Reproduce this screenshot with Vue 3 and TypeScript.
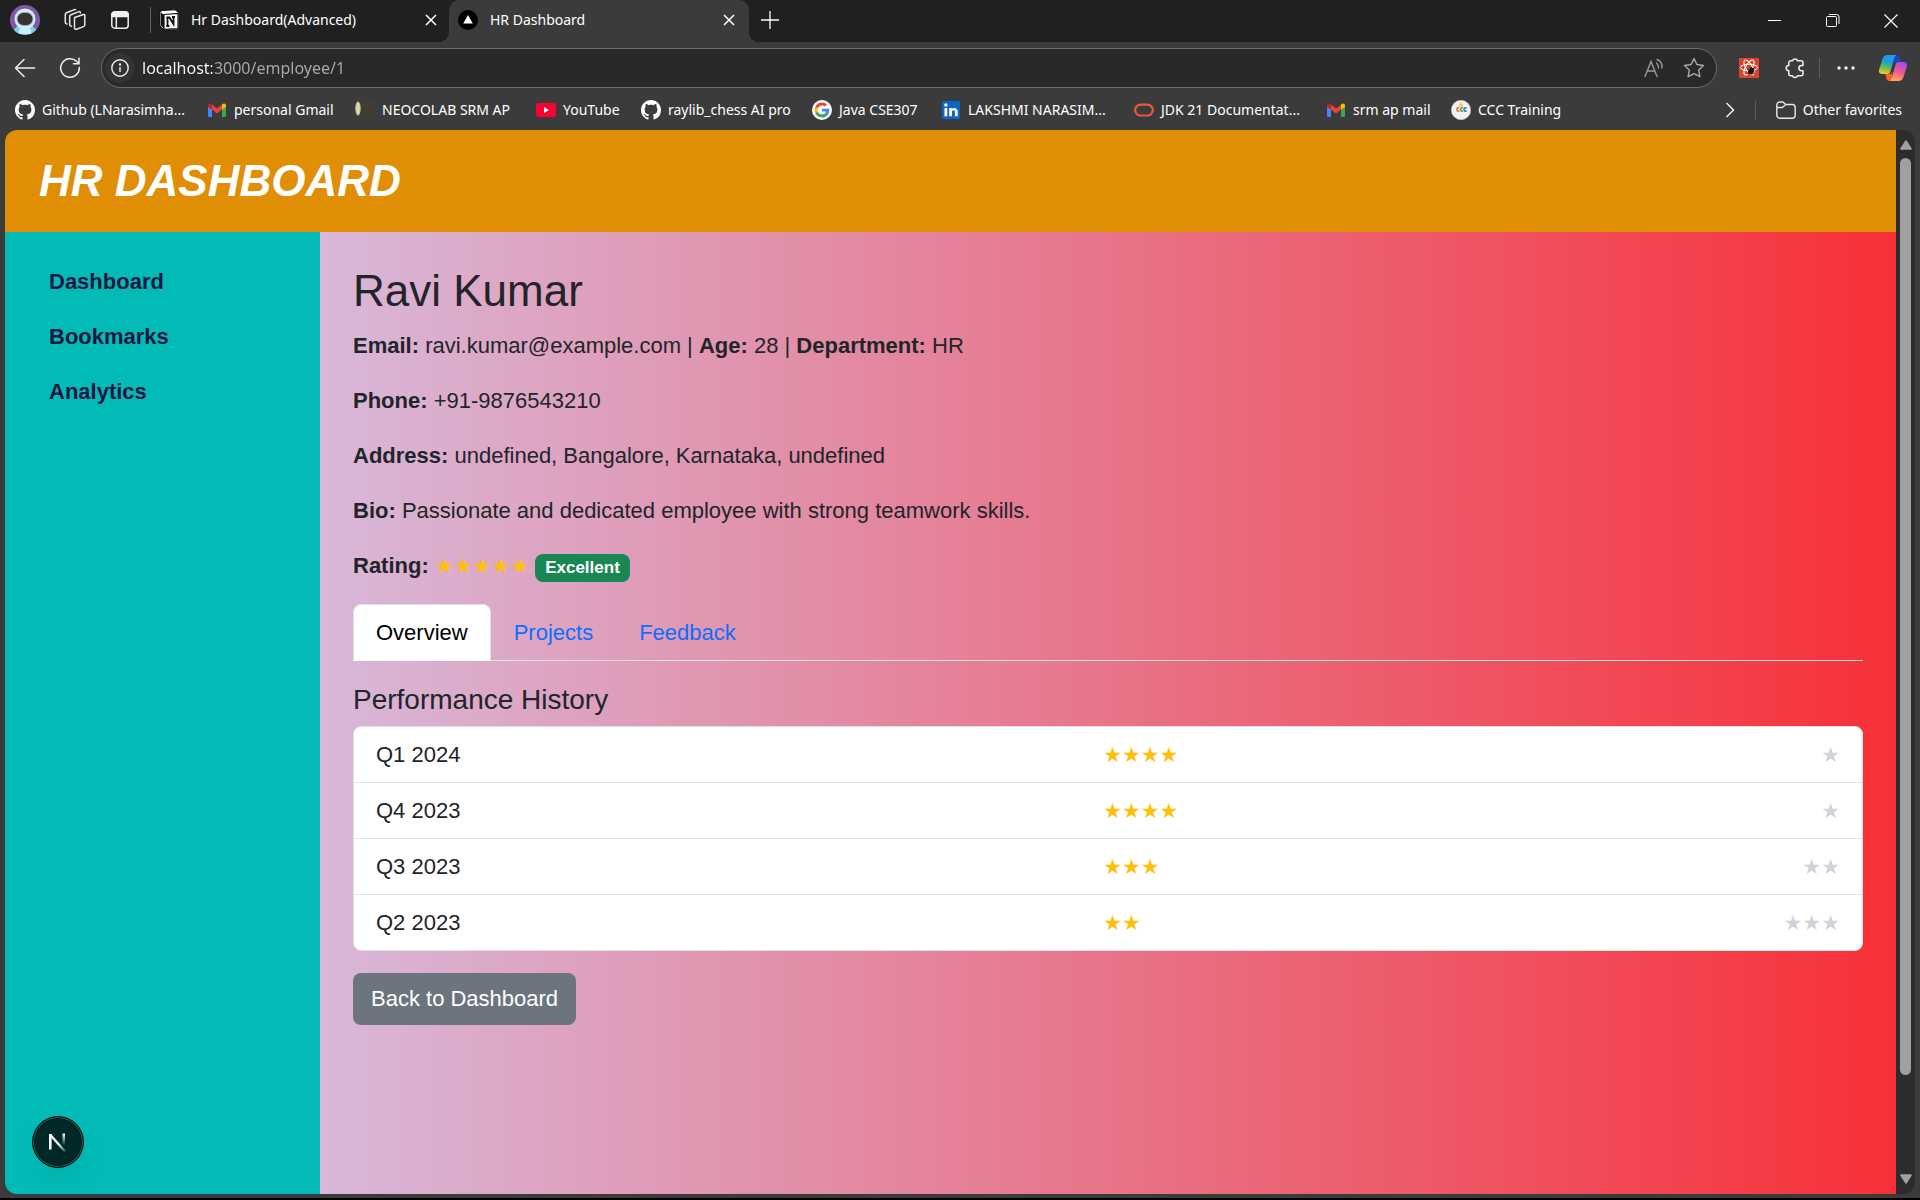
<script setup lang="ts">
import { ref } from 'vue'

interface Bookmark {
  label: string
  icon: string
  width: number
}

interface Quarter {
  name: string
  score: number
}

const bookmarks: Bookmark[] = [
  { label: 'Github (LNarasimha...', icon: 'github', width: 192 },
  { label: 'personal Gmail', icon: 'gmail', width: 148 },
  { label: 'NEOCOLAB SRM AP', icon: 'srm', width: 181 },
  { label: 'YouTube', icon: 'youtube', width: 105 },
  { label: 'raylib_chess AI pro', icon: 'github', width: 171 },
  { label: 'Java CSE307', icon: 'google', width: 129 },
  { label: 'LAKSHMI NARASIM...', icon: 'linkedin', width: 193 },
  { label: 'JDK 21 Documentat...', icon: 'oracle', width: 192 },
  { label: 'srm ap mail', icon: 'gmail', width: 125 },
  { label: 'CCC Training', icon: 'ccc', width: 125 },
]

const links = ['Dashboard', 'Bookmarks', 'Analytics']
const tabs = ['Overview', 'Projects', 'Feedback']
const activeTab = ref('Overview')
const address = ref('localhost:3000/employee/1')

const history: Quarter[] = [
  { name: 'Q1 2024', score: 4 },
  { name: 'Q4 2023', score: 4 },
  { name: 'Q3 2023', score: 3 },
  { name: 'Q2 2023', score: 2 },
]

const stars = (n: number): string => '★'.repeat(n)
</script>

<template>
  <div class="window">
    <div class="tabstrip">
      <div class="strip-tools">
        <button class="icon-btn" aria-label="Profile">
          <svg width="30" height="30" viewBox="0 0 30 30">
            <defs><clipPath id="av"><circle cx="15" cy="15" r="15" /></clipPath></defs>
            <g clip-path="url(#av)">
              <rect width="30" height="30" fill="#7f5aa8" />
              <path d="M3 30c0-7 4-10 12-10s12 3 12 10z" fill="#7fd0e4" />
              <circle cx="15" cy="14" r="10.500" fill="#d3eef4" />
              <rect x="7" y="7.500" width="16" height="13" rx="6.500" fill="#35322f" stroke="#8fb7c1" />
              <rect x="9" y="24" width="12" height="5" rx="1" fill="#c9f0f7" />
            </g>
          </svg>
        </button>
        <button class="icon-btn" aria-label="Workspaces">
          <svg width="24" height="24" viewBox="0 0 24 24" fill="none" stroke="#e8e8e8" stroke-width="1.500" stroke-linejoin="round">
            <path d="M11.500 9.500l9-3a1 1 0 0 1 1.300 1v9.300a2 2 0 0 1-1.300 1.800l-7 2.700a1.500 1.500 0 0 1-2-1.400z" />
            <path d="M9 18.500l-1.500-.6a1.500 1.500 0 0 1-.8-1.400V8.600a2 2 0 0 1 1.200-1.800l8-3.200a1 1 0 0 1 1.400 1v1" />
            <path d="M4.600 16.200l-1.500-.6a1.500 1.500 0 0 1-.8-1.400V6.600a2 2 0 0 1 1.200-1.800l8-3.200a1 1 0 0 1 1.300.7" />
          </svg>
        </button>
        <button class="icon-btn" aria-label="Tab actions">
          <svg width="20" height="20" viewBox="0 0 20 20" fill="none" stroke="#f0f0f0" stroke-width="1.500">
            <rect x="1.800" y="1.800" width="16.400" height="16.400" rx="3" />
            <path d="M2 5a3 3 0 0 1 3-3h10a3 3 0 0 1 3 3v1.500H2z" fill="#f0f0f0" />
            <path d="M6.300 6v12" />
          </svg>
        </button>
        <span class="divider"></span>
      </div>

      <div class="tab">
        <svg width="22" height="22" viewBox="0 0 22 22">
          <path d="M2 3l2-1.500 13-.7 4 3V19l-1.500 1.800L6 21l-4-4z" fill="#fff" stroke="#111" />
          <path d="M3 3.500l3 2.500v14L3 16.500z" fill="#111" />
          <path d="M6 5.500l14-1v15l-14 .8z" fill="#fff" stroke="#111" stroke-width="1.200" />
          <path d="M9.500 17V8.500h2l4 6.500V8M8.300 8.500h2M14 8h3M8.300 17h3" fill="none" stroke="#111" stroke-width="1.800" />
        </svg>
        <span class="tab-title">Hr Dashboard(Advanced)</span>
        <button class="icon-btn" aria-label="Close Hr Dashboard(Advanced)">
          <svg width="12" height="12" viewBox="0 0 12 12" stroke="#fff" stroke-width="1.500"><path d="M1 1l10 10M11 1L1 11" /></svg>
        </button>
      </div>

      <div class="tab current">
        <svg width="20" height="20" viewBox="0 0 20 20"><circle cx="10" cy="10" r="10" fill="#000" /><path d="M10 5l4.800 8.500H5.200z" fill="#fff" /></svg>
        <span class="tab-title">HR Dashboard</span>
        <button class="icon-btn" aria-label="Close HR Dashboard">
          <svg width="12" height="12" viewBox="0 0 12 12" stroke="#fff" stroke-width="1.500"><path d="M1 1l10 10M11 1L1 11" /></svg>
        </button>
      </div>
      <button class="icon-btn new-tab" aria-label="New tab">
        <svg width="18" height="18" viewBox="0 0 18 18" stroke="#fff" stroke-width="1.300"><path d="M9 0v18M0 9h18" /></svg>
      </button>

      <div class="window-buttons">
        <button class="icon-btn" aria-label="Minimize">
          <svg width="14" height="14" viewBox="0 0 14 14" stroke="#fff"><path d="M0 6.500h13" /></svg>
        </button>
        <button class="icon-btn" aria-label="Restore">
          <svg width="14" height="14" viewBox="0 0 14 14" fill="none" stroke="#fff"><rect x="0.500" y="2.500" width="10" height="10" rx="1" /><path d="M3 .5h7.500a2.500 2.500 0 0 1 2.500 2.500V10" /></svg>
        </button>
        <button class="icon-btn" aria-label="Close window">
          <svg width="14" height="14" viewBox="0 0 14 14" stroke="#fff" stroke-width="1.200"><path d="M.5.5l13 13M13.500.5l-13 13" /></svg>
        </button>
      </div>
    </div>

    <div class="toolbar">
      <button class="icon-btn" aria-label="Back">
        <svg width="22" height="20" viewBox="0 0 22 20" fill="none" stroke="#f0f0f0" stroke-width="1.500" stroke-linecap="round" stroke-linejoin="round"><path d="M10 1.500L1.500 10l8.500 8.500M1.800 10H20.500" /></svg>
      </button>
      <button class="icon-btn refresh" aria-label="Refresh">
        <svg width="22" height="22" viewBox="0 0 22 22" fill="none" stroke="#f0f0f0" stroke-width="1.500" stroke-linecap="round"><path d="M20.300 10.500A9.300 9.300 0 1 1 17.500 4.300L20 6.700M20 1.300v5.500h-5.500" /></svg>
      </button>
      <div class="address">
        <button class="site-info" aria-label="Site information">
          <svg width="18" height="18" viewBox="0 0 18 18" fill="none" stroke="#f0f0f0" stroke-width="1.400"><circle cx="9" cy="9" r="8.200" /><path d="M9 8v5" /><circle cx="9" cy="5.500" r=".5" fill="#fff" /></svg>
        </button>
        <input v-model="address" class="url" type="text" aria-label="Address" />
        <button class="icon-btn" aria-label="Read aloud">
          <svg width="20" height="20" viewBox="0 0 20 20" fill="none" stroke="#9a9a9a" stroke-width="1.400" stroke-linecap="round"><path d="M1 18.500L7 3.500l6 15M3.300 13h7.500M12.500 5a6 6 0 0 1 2 5M13 1.500a8 8 0 0 1 5 8.500" /></svg>
        </button>
        <button class="icon-btn" aria-label="Add to favorites">
          <svg width="22" height="22" viewBox="0 0 22 22" fill="none" stroke="#a8a8a8" stroke-width="1.400" stroke-linejoin="round"><path d="M11 1.500l2.900 6 6.600 1-4.800 4.600 1.200 6.600-5.900-3.100-5.900 3.100 1.200-6.600L1.500 8.500l6.600-1z" /></svg>
        </button>
      </div>
      <button class="icon-btn" aria-label="React Developer Tools">
        <svg width="20" height="20" viewBox="0 0 20 20">
          <rect width="20" height="20" rx="1" fill="#d9452f" />
          <g fill="none" stroke="#fff" stroke-width="1"><ellipse cx="10" cy="9.500" rx="8.500" ry="3.300" /><ellipse cx="10" cy="9.500" rx="8.500" ry="3.300" transform="rotate(60 10 9.500)" /><ellipse cx="10" cy="9.500" rx="8.500" ry="3.300" transform="rotate(120 10 9.500)" /></g>
          <ellipse cx="12" cy="13" rx="2.600" ry="3.800" fill="#1c1311" transform="rotate(35 12 13)" />
          <path d="M8 11l8 5M15 10l-7 6M11 9l2 8" stroke="#1c1311" stroke-width=".8" />
        </svg>
      </button>
      <button class="icon-btn extensions" aria-label="Extensions">
        <svg width="20" height="22" viewBox="0 0 20 22" fill="none" stroke="#f0f0f0" stroke-width="1.500" stroke-linejoin="round"><path d="M7.500 3.800a2.600 2.600 0 0 1 5 0H16a2 2 0 0 1 2 2v2.700h-1.500a2.600 2.600 0 0 0 0 5.200H18v3a2 2 0 0 1-2 2h-3.500a2.600 2.600 0 0 1-5 0H5.800a2 2 0 0 1-2-2v-3a2.600 2.600 0 0 1 0-5.200V5.800a2 2 0 0 1 2-2z" /></svg>
      </button>
      <span class="divider short"></span>
      <button class="icon-btn" aria-label="Settings and more">
        <svg width="18" height="4" viewBox="0 0 18 4" fill="#f0f0f0"><circle cx="2" cy="2" r="1.700" /><circle cx="9" cy="2" r="1.700" /><circle cx="16" cy="2" r="1.700" /></svg>
      </button>
      <button class="icon-btn copilot" aria-label="Copilot">
        <svg width="28" height="26" viewBox="0 0 28 26">
          <defs>
            <linearGradient id="cpa" x1="0.500" y1="0" x2="0.300" y2="1"><stop offset="0" stop-color="#2199f2" /><stop offset=".35" stop-color="#1c9fd6" /><stop offset=".65" stop-color="#64b95a" /><stop offset="1" stop-color="#f7cb1c" /></linearGradient>
            <linearGradient id="cpb" x1="0.700" y1="0" x2="0.400" y2="1"><stop offset="0" stop-color="#a04bee" /><stop offset=".5" stop-color="#f0568f" /><stop offset="1" stop-color="#ffab57" /></linearGradient>
          </defs>
          <path d="M15 0h2.500c2 0 2.800 1.500 3.300 3.300l1 3.700h-3.600c-2 0-3 .8-3.500 2.800z" fill="#1546c8" />
          <path d="M13 26h-2.500c-2 0-2.800-1.500-3.300-3.300L6.300 19h3.500c2 0 3-.8 3.500-2.800z" fill="#f4642e" />
          <path d="M8.500 0H18c-1.600 0-2.300 1.500-2.900 3.500l-3.600 12.700C11 18 10 19 8 19H3c-2.600 0-3.600-2-2.700-5L3.600 3.700C4.400 1.200 6 0 8.500 0z" fill="url(#cpa)" />
          <path d="M19.500 26H10c1.600 0 2.300-1.500 2.900-3.500L16.500 9.800C17 8 18 7 20 7h5c2.600 0 3.600 2 2.700 5l-3.300 10.300c-.8 2.500-2.400 3.700-4.900 3.700z" fill="url(#cpb)" />
        </svg>
      </button>
    </div>

    <nav class="bookmarks" aria-label="Favorites">
      <a v-for="b in bookmarks" :key="b.label" href="#" class="bookmark" :style="{ width: b.width + 'px' }">
        <svg v-if="b.icon === 'github'" width="20" height="20" viewBox="0 0 16 16" fill="#fff"><path d="M8 0C3.580 0 0 3.580 0 8c0 3.540 2.290 6.530 5.470 7.590.4.070.55-.17.55-.38 0-.19-.01-.82-.01-1.490-2.010.37-2.530-.49-2.690-.94-.09-.23-.48-.94-.82-1.130-.28-.15-.68-.52-.01-.53.63-.01 1.080.58 1.230.82.72 1.210 1.870.87 2.330.66.07-.52.28-.87.51-1.070-1.780-.2-3.640-.89-3.640-3.950 0-.87.31-1.590.82-2.150-.08-.2-.36-1.020.08-2.120 0 0 .67-.21 2.200.82.64-.18 1.320-.27 2-.27s1.360.09 2 .27c1.530-1.040 2.200-.82 2.200-.82.44 1.100.16 1.920.08 2.120.51.56.82 1.270.82 2.150 0 3.070-1.870 3.750-3.650 3.950.29.25.54.73.54 1.480 0 1.070-.01 1.930-.01 2.200 0 .21.15.46.55.38A8.010 8.010 0 0 0 16 8c0-4.420-3.580-8-8-8z" /></svg>
        <svg v-else-if="b.icon === 'gmail'" width="20" height="20" viewBox="0 0 20 20">
          <path d="M1 6v9.500A1.500 1.500 0 0 0 2.500 17H5V8z" fill="#4285f4" />
          <path d="M19 6v9.500a1.500 1.500 0 0 1-1.500 1.500H15V8z" fill="#34a853" />
          <path d="M5 4.500l5 4 5-4v5l-5 4-5-4z" fill="#ea4335" />
          <path d="M1 5.500C1 3.200 3.300 2.800 5 4.500v5L1 7z" fill="#c5221f" />
          <path d="M19 5.500c0-2.300-2.300-2.700-4-1v5L19 7z" fill="#fbbc04" />
        </svg>
        <svg v-else-if="b.icon === 'srm'" width="20" height="20" viewBox="0 0 20 20">
          <ellipse cx="3" cy="8.500" rx="2.700" ry="7" fill="#c9c695" /><ellipse cx="3" cy="8.500" rx="1.400" ry="5" fill="#dedbb8" />
          <path d="M8 2h3v3H8v3h3v3H8M13 11V2h2v5M17 11V2l2 3v6M8 13h11M9 17h3M16 17h3" fill="none" stroke="#45432c" stroke-width="1.200" />
        </svg>
        <svg v-else-if="b.icon === 'youtube'" width="20" height="20" viewBox="0 0 20 20"><rect y="3" width="20" height="14" rx="3" fill="#ff0033" /><path d="M8 7l5 3-5 3z" fill="#fff" /></svg>
        <svg v-else-if="b.icon === 'google'" width="20" height="20" viewBox="0 0 20 20">
          <circle cx="10" cy="10" r="10" fill="#fff" />
          <g transform="translate(2.500 2.500) scale(.3125)">
            <path fill="#EA4335" d="M24 9.500c3.540 0 6.710 1.220 9.210 3.600l6.850-6.850C35.900 2.380 30.470 0 24 0 14.620 0 6.510 5.380 2.560 13.220l7.980 6.190C12.430 13.720 17.740 9.500 24 9.500z" />
            <path fill="#4285F4" d="M46.980 24.550c0-1.570-.15-3.090-.38-4.550H24v9.020h12.940c-.58 2.960-2.260 5.480-4.780 7.180l7.730 6c4.510-4.180 7.090-10.360 7.090-17.650z" />
            <path fill="#FBBC05" d="M10.530 28.590c-.48-1.450-.76-2.990-.76-4.590s.27-3.140.76-4.590l-7.980-6.190C.92 16.460 0 20.120 0 24c0 3.880.92 7.540 2.560 10.780l7.970-6.190z" />
            <path fill="#34A853" d="M24 48c6.480 0 11.930-2.130 15.890-5.810l-7.730-6c-2.150 1.450-4.920 2.300-8.160 2.300-6.260 0-11.570-4.220-13.470-9.910l-7.980 6.190C6.510 42.620 14.620 48 24 48z" />
          </g>
        </svg>
        <svg v-else-if="b.icon === 'linkedin'" width="20" height="20" viewBox="0 0 20 20"><rect x="1" y="1" width="18" height="18" rx="1.500" fill="#0a66c2" /><g fill="#fff"><rect x="3.500" y="8" width="2.800" height="8.300" /><circle cx="4.900" cy="5" r="1.700" /><path d="M8.200 8h2.600v1.200c1.700-2.300 5.900-1.600 5.900 2.300v4.800h-2.800V12c0-2.200-2.900-2.200-2.900 0v4.300H8.200z" /></g></svg>
        <svg v-else-if="b.icon === 'oracle'" width="20" height="20" viewBox="0 0 20 20"><rect x="1.200" y="4.700" width="17.600" height="10.800" rx="5.400" fill="none" stroke="#f2553f" stroke-width="2.200" /></svg>
        <svg v-else width="20" height="20" viewBox="0 0 20 20"><circle cx="10" cy="10" r="9.700" fill="#f1f1f1" stroke="#d0d0d0" stroke-width=".6" /><circle cx="10" cy="5" r="2" fill="#f4d13b" /><g fill="none" stroke-width="1.500"><path d="M8.300 8.200a1.500 1.700 0 1 0 0 2.600" stroke="#e2703a" /><path d="M12 8.200a1.500 1.700 0 1 0 0 2.600" stroke="#4aa35a" /><path d="M15.500 8.200a1.500 1.700 0 1 0 0 2.600" stroke="#3c66c9" /></g></svg>
        <span>{{ b.label }}</span>
      </a>
      <div class="bookmarks-end">
        <button class="icon-btn" aria-label="More favorites"><svg width="10" height="16" viewBox="0 0 10 16" fill="none" stroke="#f0f0f0" stroke-width="1.500"><path d="M1.500 1l7 7-7 7" /></svg></button>
        <span class="divider short"></span>
        <a href="#" class="bookmark">
          <svg width="20" height="20" viewBox="0 0 20 20" fill="none" stroke="#e8e8e8" stroke-width="1.400" stroke-linejoin="round"><path d="M.8 5a3 3 0 0 1 3-3h3l3 2.500h6.400a3 3 0 0 1 3 3v7.700a3 3 0 0 1-3 3H3.800a3 3 0 0 1-3-3zM.8 7.500h5.500l3.500-3" /></svg>
          <span>Other favorites</span>
        </a>
      </div>
    </nav>

    <div class="viewport">
      <div class="page">
        <header class="banner"><h1>HR DASHBOARD</h1></header>
        <div class="body">
          <aside class="sidebar">
            <a v-for="l in links" :key="l" href="#">{{ l }}</a>
          </aside>
          <main class="content">
            <h2>Ravi Kumar</h2>
            <p><strong>Email:</strong> ravi.kumar@example.com | <strong>Age:</strong> 28 | <strong>Department:</strong> HR</p>
            <p><strong>Phone:</strong> +91-9876543210</p>
            <p><strong>Address:</strong> undefined, Bangalore, Karnataka, undefined</p>
            <p><strong>Bio:</strong> Passionate and dedicated employee with strong teamwork skills.</p>
            <p class="rating"><strong>Rating:</strong> <span class="stars gold">{{ stars(5) }}</span> <span class="badge">Excellent</span></p>

            <div class="nav-tabs" role="tablist">
              <button v-for="t in tabs" :key="t" role="tab" class="nav-tab" :class="{ active: t === activeTab }" :aria-selected="t === activeTab" @click="activeTab = t">{{ t }}</button>
            </div>

            <h3>Performance History</h3>
            <ul class="history">
              <li v-for="q in history" :key="q.name">
                <span>{{ q.name }}</span>
                <span class="stars gold">{{ stars(q.score) }}</span>
                <span class="stars muted">{{ stars(5 - q.score) }}</span>
              </li>
            </ul>
            <button class="back">Back to Dashboard</button>
          </main>
        </div>
        <button class="dev-badge" aria-label="Open Next.js Dev Tools">
          <svg width="22" height="22" viewBox="0 0 22 22" fill="none">
            <defs>
              <linearGradient id="nd" gradientUnits="userSpaceOnUse" x1="12" y1="12" x2="18" y2="20"><stop stop-color="#fff" /><stop offset="1" stop-color="#fff" stop-opacity="0.200" /></linearGradient>
              <linearGradient id="nv" x1="0" y1="0" x2="0" y2="1"><stop stop-color="#fff" /><stop offset="1" stop-color="#fff" stop-opacity="0" /></linearGradient>
            </defs>
            <path d="M3 3.500L18 20.500" stroke="url(#nd)" stroke-width="2.400" />
            <path d="M3.300 18.500V3" stroke="#fff" stroke-width="2.600" />
            <rect x="15.500" y="2.500" width="2.500" height="12" fill="url(#nv)" />
          </svg>
        </button>
      </div>
      <div class="scrollbar" aria-hidden="true">
        <svg width="12" height="10" viewBox="0 0 12 10" fill="#a0a0a0"><path d="M5.200.7a1 1 0 0 1 1.600 0l4.800 7.500a1 1 0 0 1-.8 1.600H1.200a1 1 0 0 1-.8-1.600z" /></svg>
        <div class="track"><div class="thumb"></div></div>
        <svg width="12" height="10" viewBox="0 0 12 10" fill="#a0a0a0"><path d="M5.200 9.300a1 1 0 0 0 1.600 0l4.800-7.500A1 1 0 0 0 10.800.2H1.200a1 1 0 0 0-.8 1.600z" /></svg>
      </div>
    </div>
  </div>
</template>

<style>
body {
  margin: 0;
  background: #000;
}
</style>

<style scoped>
* {
  box-sizing: border-box;
}

.window {
  min-height: 100vh;
  display: flex;
  flex-direction: column;
  background: #3b3b3b;
  border-bottom: 2px solid #000;
  font-family: "Noto Sans", "Open Sans", sans-serif;
  font-size: 14px;
  color: #fff;
}

button {
  font: inherit;
  color: inherit;
  border: 0;
  padding: 0;
  background: none;
}

a {
  color: inherit;
  text-decoration: none;
}

svg {
  display: block;
  flex: none;
}

.icon-btn {
  display: flex;
  align-items: center;
  justify-content: center;
  flex: none;
}

.divider {
  width: 1px;
  height: 26px;
  background: #666;
  flex: none;
}

.divider.short {
  height: 20px;
  background: #5a5a5a;
}

/* tab strip */
.tabstrip {
  display: flex;
  height: 42px;
  background: #202020;
}

.strip-tools {
  display: flex;
  align-items: center;
  width: 151px;
  padding-left: 10px;
  gap: 23px;
  height: 40px;
}

.strip-tools .divider {
  margin-left: -3px;
}

.tab {
  display: flex;
  align-items: center;
  gap: 11px;
  width: 298px;
  height: 40px;
  padding: 0 12px 0 7px;
}

.tab.current {
  position: relative;
  width: 300px;
  height: 42px;
  gap: 12px;
  padding: 0 14px 2px 9px;
  background: #3b3b3b;
  border-radius: 10px 10px 0 0;
}

.tab.current::before,
.tab.current::after {
  content: "";
  position: absolute;
  bottom: 0;
  width: 10px;
  height: 10px;
}

.tab.current::before {
  left: -10px;
  background: radial-gradient(circle at 0 0, transparent 10px, #3b3b3b 10px);
}

.tab.current::after {
  right: -10px;
  background: radial-gradient(circle at 100% 0, transparent 10px, #3b3b3b 10px);
}

.tab-title,
.bookmark span {
  padding-bottom: 2px;
  white-space: nowrap;
}

.tab-title {
  flex: 1;
}

.new-tab {
  width: 42px;
  height: 40px;
}

.window-buttons {
  display: flex;
  margin-left: auto;
}

.window-buttons .icon-btn {
  width: 58px;
}

/* toolbar */
.toolbar {
  display: flex;
  align-items: center;
  height: 52px;
  padding: 0 13px 0 14px;
  gap: 22px;
}

.refresh {
  margin-left: 1px;
}

.address {
  flex: 1;
  display: flex;
  align-items: center;
  height: 40px;
  gap: 19px;
  margin-left: -2px;
  padding: 0 11px 0 3px;
  border: 1px solid #6b6b6b;
  border-radius: 20px;
  background: #292929;
}

.site-info {
  display: flex;
  align-items: center;
  justify-content: center;
  width: 30px;
  height: 30px;
  border-radius: 50%;
  background: #333;
}

.url {
  flex: 1;
  min-width: 0;
  margin-left: -12px;
  padding: 0;
  border: 0;
  outline: 0;
  font: 16px/24px "Noto Sans", "Open Sans", sans-serif;
  color: transparent;
  background: linear-gradient(to right, #fff 70px, #ababab 70px);
  background-clip: text;
  -webkit-background-clip: text;
}

.extensions {
  margin-left: 4px;
}

.toolbar .divider {
  margin: 0 -5px 0 -8px;
}

.copilot {
  margin-left: 2px;
}

/* bookmarks bar */
.bookmarks {
  display: flex;
  align-items: center;
  height: 36px;
  padding: 0 18px 4px 15px;
}

.bookmark {
  display: flex;
  align-items: center;
  gap: 7px;
  flex: none;
}

.bookmarks-end {
  display: flex;
  align-items: center;
  gap: 20px;
  margin-left: auto;
}

/* page */
.viewport {
  flex: 1;
  display: flex;
  margin: 0 5px 4px;
  border-radius: 12px;
  overflow: hidden;
  background: #2c2c2c;
}

.page {
  position: relative;
  flex: 1;
  display: flex;
  flex-direction: column;
  font: 22px/33px "Liberation Sans", Arial, sans-serif;
  color: #212529;
}

.banner {
  padding: 24px 34px 25px;
  background: #df8e05;
  color: #fff;
}

.banner h1 {
  margin: 0;
  font-size: 44px;
  line-height: 53px;
  font-weight: 700;
  font-style: italic;
}

.body {
  flex: 1;
  display: flex;
}

.sidebar {
  display: flex;
  flex-direction: column;
  gap: 22px;
  flex: 0 0 315px;
  padding: 33px 44px;
  background: #02bbb7;
  color: #1c1740;
  font-weight: 700;
}

.content {
  flex: 1;
  padding: 32px 33px 33px;
  background: linear-gradient(to right, #d9b8d9, #f73038);
}

h2 {
  margin: 0 0 12px;
  font-size: 44px;
  line-height: 53px;
  font-weight: 400;
}

p {
  margin: 0 0 22px;
}

.stars {
  font-family: "DejaVu Sans", sans-serif;
  font-size: 21px;
  line-height: 22px;
}

.gold {
  color: #ffc107;
}

.muted {
  color: #ced4da;
}

.rating {
  height: 33px;
}

.badge {
  display: inline-block;
  padding: 6px 10px;
  border-radius: 8px;
  background: #198754;
  color: #fff;
  font-size: 17px;
  line-height: 16px;
  font-weight: 700;
}

.nav-tabs {
  display: flex;
  margin-bottom: 22px;
  border-bottom: 1px solid #dee2e6;
}

.nav-tab {
  margin-bottom: -1px;
  padding: 11px 22px;
  border: 1px solid transparent;
  border-radius: 8px 8px 0 0;
  color: #0d6efd;
  line-height: 33px;
}

.nav-tab.active {
  background: #fff;
  border-color: #dee2e6 #dee2e6 #fff;
  color: #000;
}

h3 {
  margin: 0 0 10px;
  font-size: 28px;
  line-height: 33px;
  font-weight: 400;
}

.history {
  margin: 0 0 22px;
  padding: 0;
  list-style: none;
  background: #fff;
  border: 1px solid #dee2e6;
  border-radius: 8px;
}

.history li {
  display: flex;
  align-items: center;
  justify-content: space-between;
  padding: 11px 22px;
}

.history li + li {
  border-top: 1px solid #dee2e6;
}

.back {
  padding: 9px 18px 10px;
  border-radius: 8px;
  background: #6c757d;
  color: #fff;
}

.dev-badge {
  position: absolute;
  left: 27px;
  bottom: 26px;
  display: flex;
  align-items: center;
  justify-content: center;
  width: 52px;
  height: 52px;
  border-radius: 50%;
  background: #002826;
  border: 1px solid #0b1716;
  box-shadow: inset 0 0 0 1px #3b5654, 0 16px 32px -8px rgba(0, 0, 0, 0.1);
}

.scrollbar {
  display: flex;
  flex-direction: column;
  align-items: center;
  width: 19px;
  padding: 10px 0;
}

.track {
  flex: 1;
  width: 11px;
  padding: 8px 0;
}

.thumb {
  height: 91%;
  border-radius: 6px;
  background: #a0a0a0;
}
</style>
